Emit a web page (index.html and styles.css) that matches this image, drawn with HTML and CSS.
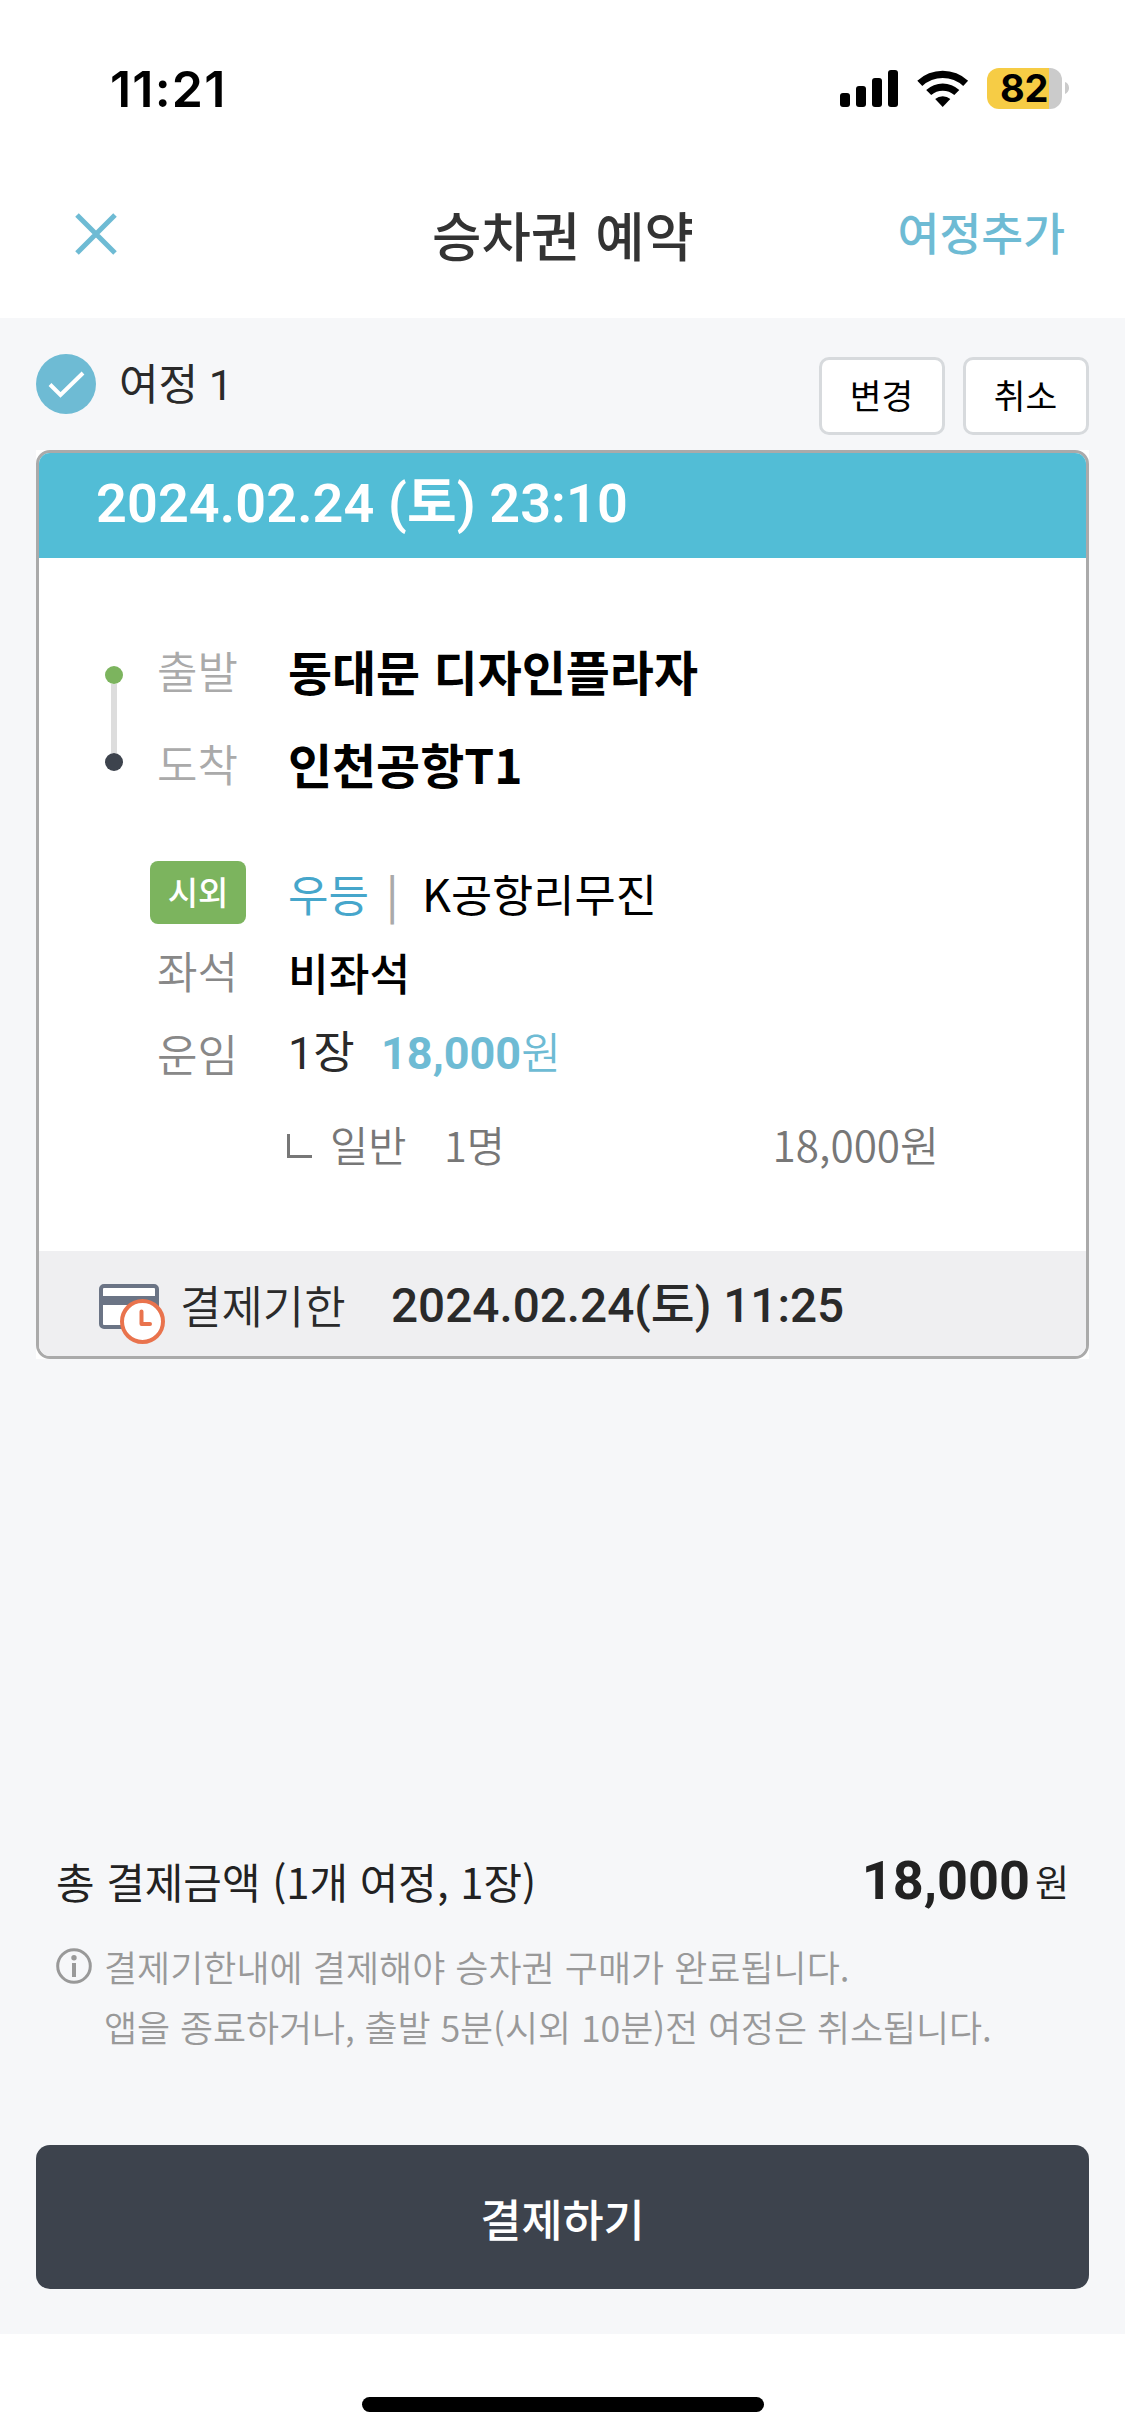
FILE: index.html
```html
<!DOCTYPE html>
<html lang="ko">
<head>
<meta charset="utf-8">
<title>승차권 예약</title>
<link rel="stylesheet" href="styles.css">
</head>
<body>
<div class="screen">
  <div class="status-bar">
    <span class="clock">11:21</span>
    <div class="status-icons">
      <svg class="signal" width="58" height="38" viewBox="0 0 58 38"><rect x="0" y="23" width="10" height="14" rx="3"/><rect x="16" y="16" width="10" height="21" rx="3"/><rect x="32" y="8" width="10" height="29" rx="3"/><rect x="48" y="0" width="10" height="37" rx="3"/></svg>
      <svg class="wifi" width="52" height="38" viewBox="0 0 52 38"><path d="M0.3 10.8A37 37 0 0 1 51.1 10.8L46.2 16A30 30 0 0 0 5.3 16Z"/><path d="M9.2 20A24.5 24.5 0 0 1 42.3 20L37.3 25A17.5 17.5 0 0 0 14.2 25Z"/><path d="M18.2 29A11.5 11.5 0 0 1 33.3 29L25.7 37Z"/></svg>
      <div class="battery"><span class="battery-level">82</span></div>
      <svg class="battery-tip" width="4" height="12" viewBox="0 0 4 12"><path d="M0 0C5.4 2 5.4 10 0 12Z"/></svg>
    </div>
  </div>
  <header class="nav">
    <svg class="close" width="42" height="42" viewBox="0 0 42 42"><path d="M2 2L40 40M40 2L2 40"/></svg>
    <h1 class="title">승차권 예약</h1>
    <a class="add-trip">여정추가</a>
  </header>

  <main class="content">
    <div class="trip-head">
      <svg class="check" width="60" height="60" viewBox="0 0 60 60"><circle cx="30" cy="30" r="30"/><path d="M14 30.500L24.500 41L47 19"/></svg>
      <h2 class="trip-name">여정 1</h2>
      <button class="small-button">변경</button>
      <button class="small-button">취소</button>
    </div>

    <div class="ticket-wrap">
      <section class="ticket">
        <div class="ticket-date">2024.02.24 (토) 23:10</div>
        <div class="ticket-body">
          <div class="route">
            <div class="route-line"><i class="dot dot-from"></i><i class="track"></i><i class="dot dot-to"></i></div>
            <div class="route-rows">
              <div class="row stop"><span class="label light">출발</span><span class="place">동대문 디자인플라자</span></div>
              <div class="row stop"><span class="label light">도착</span><span class="place">인천공항T1</span></div>
            </div>
          </div>
          <div class="row bus"><span class="badge">시외</span><span class="grade">우등</span><span class="bar">|</span><span class="company">K공항리무진</span></div>
          <div class="row seat"><span class="label">좌석</span><span class="seat-value">비좌석</span></div>
          <div class="row fare"><span class="label">운임</span><span class="count">1장</span><span class="price"><b>18,000</b>원</span></div>
          <div class="row detail"><svg class="branch" width="25" height="24" viewBox="0 0 25 24"><path d="M1.500 0V22.500H25"/></svg><span class="kind">일반</span><span class="people">1명</span><span class="detail-price">18,000원</span></div>
        </div>
        <div class="deadline">
          <svg class="card-icon" width="67" height="61" viewBox="0 0 67 61"><rect x="2" y="2" width="56" height="41" rx="3" fill="#fff" stroke="#6b7485" stroke-width="4"/><path d="M2 16.500H58" stroke="#6b7485" stroke-width="9"/><circle cx="43.500" cy="37.500" r="20.500" fill="#fff" stroke="#e9734d" stroke-width="4"/><path d="M42.500 27.500V40H51" fill="none" stroke="#e9734d" stroke-width="4" stroke-linecap="round" stroke-linejoin="round"/></svg>
          <span class="deadline-label">결제기한</span>
          <span class="deadline-time">2024.02.24(토) 11:25</span>
        </div>
      </section>
    </div>

    <div class="summary">
      <div class="total">
        <span class="total-label">총 결제금액 (1개 여정, 1장)</span>
        <strong class="total-price">18,000</strong><span class="won">원</span>
      </div>
      <div class="notice">
        <svg class="info" width="36" height="36" viewBox="0 0 36 36"><circle cx="18" cy="18" r="16.300" fill="none" stroke="#999" stroke-width="3"/><circle cx="18" cy="9.800" r="2.700" fill="#999"/><path d="M18 15V29" stroke="#999" stroke-width="4"/></svg>
        <p class="notice-text"><span class="line-one">결제기한내에 결제해야 승차권 구매가 완료됩니다.</span><br><span class="line-two">앱을 종료하거나, 출발 5분(시외 10분)전 여정은 취소됩니다.</span></p>
      </div>
      <button class="pay">결제하기</button>
    </div>
  </main>
  <footer class="home"><div class="home-bar"></div></footer>
</div>
</body>
</html>
```
FILE: styles.css
```css
* { box-sizing: border-box; }
body { margin: 0; background: #fff; font-family: "Noto Sans CJK KR", sans-serif; color: #2a2a2a; }
h1, h2, p { margin: 0; font-weight: 400; }
button { font: inherit; padding: 0; }
svg { display: block; flex: none; }
span, a, h1, h2, strong { white-space: nowrap; }

.screen { width: 1125px; height: 2436px; display: flex; flex-direction: column; overflow: hidden; }

.status-bar { height: 178px; display: flex; justify-content: space-between; padding: 0 56px 0 110px; color: #000; }
.clock { font: 600 50px/60px Inter, sans-serif; margin-top: 59px; letter-spacing: 1.2px; }
.status-icons { display: flex; align-items: flex-start; padding-top: 68px; }
.signal { margin: 2px 19px 0 0; }
.wifi { margin: 2px 18px 0 0; }
.battery { width: 75px; height: 41px; border-radius: 12px; background: linear-gradient(to right, #f6cc45 62px, #cbcbcb 62px); }
.battery-level { display: block; padding-left: 13px; font: 700 38px/41px Inter, sans-serif; letter-spacing: -0.2px; }
.battery-tip { margin: 14px 0 0 3px; fill: #cbcbcb; }

.nav { height: 140px; display: grid; grid-template-columns: 1fr auto 1fr; align-items: start; padding: 0 60px 0 75px; }
.close { margin-top: 35px; fill: none; stroke: #6ebbd4; stroke-width: 5; }
.title { font-size: 53.7px; line-height: 70px; margin-top: 21px; font-weight: 500; color: #333; transform: translateX(-7px); }
.add-trip { justify-self: end; font-size: 45.5px; line-height: 60px; margin-top: 23px; font-weight: 500; color: #6ebbd4; }

.content { height: 2016px; background: #f6f7f9; padding: 0 36px; display: flex; flex-direction: column; }
.trip-head { height: 132px; display: flex; align-items: flex-start; padding-top: 36px; }
.check circle { fill: #6ebbd4; }
.check path { fill: none; stroke: #fff; stroke-width: 4; }
.trip-name { flex: 1; margin: 1px 0 0 23px; font: 400 43px/60px Roboto, "Noto Sans CJK KR", sans-serif; }
.small-button { width: 126px; height: 78px; margin: 3px 0 0 18px; padding: 0 1px 3px 0; border: 3px solid #d7dadd; border-radius: 10px; background: #fff; color: #000; font-size: 34.5px; line-height: 69px; }

.ticket-wrap { background: #fff; flex: none; }
.ticket { height: 909px; border: 3px solid #aaa; border-radius: 14px; overflow: hidden; display: flex; flex-direction: column; background: #fff; }
.ticket-date { height: 105px; padding-left: 57px; background: #52bdd6; color: #fff; font: 600 54px/101px Roboto, "Noto Sans CJK KR", sans-serif; letter-spacing: 0.1px; }
.ticket-body { flex: 1; padding: 66px 0 0 66px; }
.route { display: flex; }
.route-line { width: 18px; margin-right: 34px; padding-top: 42px; display: flex; flex-direction: column; align-items: center; }
.route-rows { margin-top: -1px; }
.dot { width: 18px; height: 18px; border-radius: 50%; }
.dot-from { background: #7cb45e; }
.dot-to { background: #3d434d; }
.track { width: 6px; height: 69px; background: #ddd; }
.row { display: flex; align-items: center; }
.stop { height: 93px; }
.label { width: 131px; font-size: 44px; line-height: 60px; font-weight: 350; color: #888; }
.label.light { color: #aaa; }
.place { font-size: 47.9px; line-height: 66px; font-weight: 700; color: #000; }
.bus, .seat, .fare { padding-left: 52px; }
.bus { height: 81px; margin-top: 43px; padding-left: 45px; }
.badge { width: 96px; height: 63px; margin-right: 42px; border-radius: 8px; background: #7cb45e; color: #fff; font-size: 33px; line-height: 61px; font-weight: 500; text-align: center; }
.grade { font-size: 44px; line-height: 60px; color: #46a6cb; }
.bar { margin-left: 17px; width: 36px; font-size: 44px; line-height: 60px; font-weight: 500; color: #aaa; }
.company { font-size: 44.8px; line-height: 60px; color: #000; }
.seat { height: 78px; }
.seat .label { margin-top: -5px; }
.seat-value { font-size: 44.3px; line-height: 60px; font-weight: 500; color: #000; }
.fare { height: 82px; }
.fare .label { margin-top: 1px; }
.count { width: 93px; margin-top: 4px; font: 400 45px/60px Roboto, "Noto Sans CJK KR", sans-serif; }
.price { margin-top: 4px; font: 350 43px/60px Roboto, "Noto Sans CJK KR", sans-serif; color: #6ebbd4; }
.price b { font-weight: 700; font-size: 45px; }
.detail { height: 86px; margin-top: 8px; padding: 0 147px 0 182px; color: #777; font-size: 41.5px; line-height: 56px; font-weight: 350; }
.branch { margin: 3px 18px 0 0; fill: none; stroke: #777; stroke-width: 3; }
.kind { width: 114px; }
.people { flex: 1; }
.detail-price { font-size: 42.3px; }
.deadline { height: 105px; padding-left: 60px; display: flex; align-items: center; background: #efeff1; }
.card-icon { margin-top: 22px; }
.deadline-label { margin: 2px 0 0 14px; width: 211px; font-size: 45px; line-height: 60px; font-weight: 350; }
.deadline-time { margin-top: 4px; font: 500 47.7px/60px Roboto, "Noto Sans CJK KR", sans-serif; }

.summary { margin-top: auto; height: 504px; display: flex; flex-direction: column; }
.total { height: 99px; padding: 2px 20px 0; display: flex; align-items: center; color: #222; }
.total-label { flex: 1; font-size: 41.9px; line-height: 60px; }
.total-price { font: 700 54px/60px Roboto, sans-serif; margin-right: 5px; }
.won { font-size: 37px; line-height: 60px; font-weight: 400; }
.notice { display: flex; padding: 19px 20px 0; color: #999; }
.notice-text { margin-left: 12px; margin-top: -12px; font-size: 36px; line-height: 60px; font-weight: 350; }
.line-two { letter-spacing: -0.12px; }
.pay { margin-top: auto; margin-bottom: 45px; height: 144px; border: 0; border-radius: 14px; background: #3d434d; color: #fff; font-size: 44.7px; font-weight: 500; }

.home { flex: 1; display: flex; justify-content: center; padding-top: 63px; }
.home-bar { width: 402px; height: 15px; border-radius: 8px; background: #000; }
```
